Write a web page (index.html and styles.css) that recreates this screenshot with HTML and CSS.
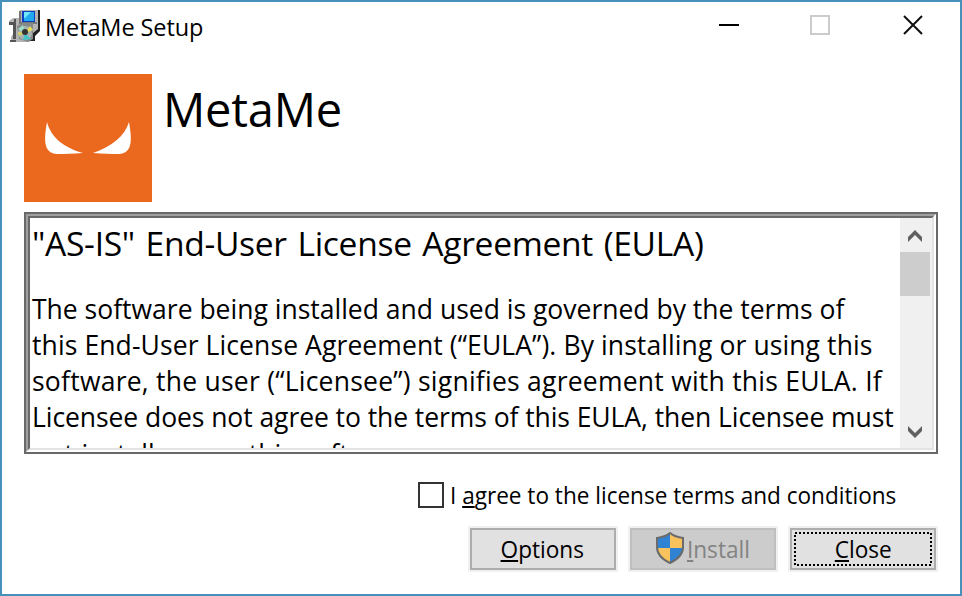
FILE: index.html
```
<!DOCTYPE html>
<html lang="en">
<head>
<meta charset="utf-8">
<title>MetaMe Setup</title>
<link rel="stylesheet" href="styles.css">
</head>
<body>
<div class="window">
  <header class="titlebar">
    <svg class="app-icon" width="32" height="33" viewBox="0 0 32 33">
      <path d="M12 0H31V20L26 25V30L20 32H3V27L5 24V15L1 13V11L5 8H11Z" fill="#b4b4b4"/>
      <path d="M30 0H32V21L27 26V31H21V29H25V23L30 19Z" fill="#222"/>
      <path d="M11 1H13V12H29V14H11Z" fill="#777"/>
      <path d="M14 1H27V12H14Z" fill="#0a3fc0"/>
      <path d="M16 2H26V11H16Z" fill="#20a8f0"/>
      <path d="M16 2H23L17 8H16Z" fill="#70e8f8"/>
      <path d="M1 12H6V9H8V29H5V15H1ZM2 30H8V32H2Z" fill="#555"/>
      <path d="M9 16L14 13H25V29L20 32L11 29Z" fill="#858a88"/>
      <circle cx="17" cy="23" r="7" fill="#a9b2af"/>
      <path d="M17 23L10 19L15 15Z" fill="#9edfc8"/>
      <path d="M17 23L22 16L25 20Z" fill="#e8df56"/>
      <path d="M17 23L10 22L11 26Z" fill="#d8d25c"/>
      <path d="M17 23L15 30L23 29Z" fill="#41c4ca"/>
      <circle cx="17" cy="22" r="3" fill="#333"/>
    </svg>
    <span class="caption">MetaMe Setup</span>
    <svg class="controls" width="206" height="22" viewBox="0 0 206 22">
      <path d="M0 11H20" stroke="#000" stroke-width="2"/>
      <rect x="92" y="2" width="18" height="18" fill="none" stroke="#ccc" stroke-width="2"/>
      <path d="M185 2L203 20M203 2L185 20" stroke="#111" stroke-width="2"/>
    </svg>
  </header>
  <section class="brand">
    <svg width="128" height="128" viewBox="0 0 128 128">
      <path d="M0 0H128V128H0Z" fill="#eb681f"/>
      <path d="M23 48C27 64 41 74 59 79Q44 80 33 80C19 79 20 65 23 48ZM105 48C101 62 87 73 69 79Q84 80 95 80C109 79 108 65 105 48Z" fill="#fff"/>
    </svg>
    <h1>MetaMe</h1>
  </section>
  <div class="frame"><div class="frame-mid"><div class="frame-in">
    <div class="license">
      <h2>"AS-IS" End-User License Agreement (EULA)</h2>
      <p class="l1">The software being installed and used is governed by the terms of</p>
      <p class="l2">this End-User License Agreement (“EULA”). By installing or using this</p>
      <p class="l3">software, the user (“Licensee”) signifies agreement with this EULA. If</p>
      <p class="l4">Licensee does not agree to the terms of this EULA, then Licensee must</p>
      <p class="l5">not install or use this software.</p>
    </div>
    <div class="scrollbar">
      <svg width="16" height="34" viewBox="0 0 16 34"><path d="M1 24V19L8 12L15 19V24L8 17Z" fill="#606060"/></svg>
      <div class="thumb"></div>
      <svg class="down" width="16" height="34" viewBox="0 0 16 34"><path d="M1 12V17L8 24L15 17V12L8 19Z" fill="#606060"/></svg>
    </div>
  </div></div></div>
  <label class="agree"><span class="box"></span><span class="agree-text">I <u>a</u>gree to the license terms and conditions</span></label>
  <footer class="buttons">
    <button class="btn"><span><u>O</u>ptions</span></button>
    <button class="btn disabled">
      <svg class="shield" width="28" height="32" viewBox="0 0 28 32">
        <path d="M14 1Q19 5 27 6V15Q27 25 14 31Q1 25 1 15V6Q9 5 14 1Z" fill="#2f83d2"/>
        <path d="M14 1Q19 5 27 6V16H14ZM14 16V31Q1 25 1 16Z" fill="#f8c25c"/>
        <path d="M14 1Q19 5 27 6V15Q27 25 14 31Q1 25 1 15V6Q9 5 14 1Z" fill="none" stroke="#6b6b6b" stroke-width="2"/>
      </svg>
      <span><u>I</u>nstall</span></button>
    <button class="btn focused"><span><u>C</u>lose</span>
      <svg class="focus" width="138" height="34"><rect x="1" y="1" width="136" height="32" fill="none" stroke="#000" stroke-width="2" stroke-dasharray="2 2"/></svg>
    </button>
  </footer>
</div>
</body>
</html>
```
FILE: styles.css
```
* { box-sizing: border-box; }
body { margin: 0; background: #fff; color: #000; font-family: "Open Sans", "Noto Sans", sans-serif; }
h1, h2, p { margin: 0; font-weight: 400; white-space: nowrap; }
u { text-decoration-thickness: 2px; text-underline-offset: 2px; text-decoration-skip-ink: none; }
.window { width: 962px; height: 596px; border: 2px solid #4690ba; overflow: hidden; }
.titlebar { display: flex; align-items: center; height: 50px; padding: 0 35px 4px 7px; }
.app-icon { margin: 3px 5px 0 -1px; }
.caption { font-size: 23.5px; letter-spacing: -0.1px; line-height: 32px; padding-top: 3px; }
.controls { margin-left: auto; }
.brand { display: flex; height: 160px; padding: 22px 22px 0; }
.brand h1 { margin-left: 11px; font-size: 47px; line-height: 70px; letter-spacing: -0.2px; }
.frame { width: 914px; height: 242px; margin-left: 22px; border: 2px solid #696969; }
.frame-mid { height: 100%; border: 2px solid; border-color: #a0a0a0 #fff #fff #a0a0a0; }
.frame-in { display: flex; height: 100%; border: 2px solid; border-color: #696969 #e3e3e3 #e3e3e3 #696969; }
.license { width: 870px; overflow: hidden; padding: 7px 0 0 2px; }
.license h2 { font-size: 33.6px; line-height: 36px; letter-spacing: -0.3px; word-spacing: 2.2px; margin-bottom: 30px; }
.license p { font-size: 26.5px; line-height: 36px; }
.license .l2 { letter-spacing: 0.1px; }
.license .l3 { letter-spacing: 0.24px; }
.license .l4 { letter-spacing: -0.07px; }
.license .l5 { padding-top: 1px; word-spacing: 1px; }
.scrollbar { display: flex; flex-direction: column; width: 32px; background: #f0f0f0; }
.scrollbar svg { margin-left: 7px; }
.thumb { width: 30px; height: 44px; background: #cdcdcd; }
.scrollbar .down { margin-top: auto; }
.agree { display: flex; align-items: center; height: 26px; margin: 28px 0 0 416px; }
.box { width: 26px; height: 26px; border: 2px solid #333; }
.agree-text { margin-left: 6px; font-size: 24px; white-space: nowrap; line-height: 26px; transform: scaleX(0.94); transform-origin: left; }
.buttons { display: flex; gap: 10px; margin: 18px 0 0 466px; }
.btn { position: relative; display: flex; align-items: center; justify-content: center; width: 146px; height: 42px; margin: 2px; padding: 0; font: 24px/40px "Open Sans", "Noto Sans", sans-serif; color: #000; background: #e1e1e1; border: 2px solid #adadad; outline: 0; box-shadow: 0 0 0 2px #f0f0f0; }
.btn span { transform: translateX(-1px) scaleX(0.942); }
.disabled { color: #838383; background: #ccc; border-color: #bfbfbf; }
.shield { margin: -3px 2px 0 2px; }
.focus { position: absolute; left: 2px; top: 2px; }
.focused span { transform: scaleX(0.942); }
```
